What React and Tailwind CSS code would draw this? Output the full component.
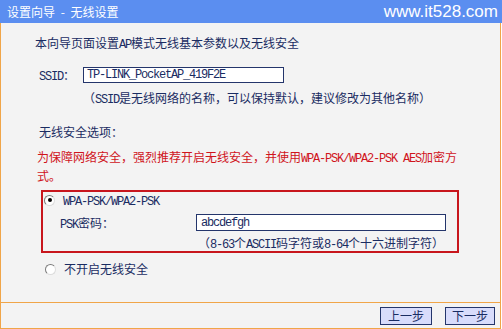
import React from "react";

const A = ({ children }) => (
    <span className="font-['Liberation_Mono'] text-[12px] leading-none tracking-[-1.2px]">{children}</span>
);

const Radio = ({ checked }) => (
    <span className="w-[11px] h-[11px] rounded-full border border-t-[#7a7a7a] border-l-[#7a7a7a] border-r-[#dcdcdc] border-b-[#dcdcdc] bg-white flex items-center justify-center shrink-0">
        {checked && <span className="w-[4px] h-[4px] rounded-full bg-black" />}
    </span>
);

const WizardWireless = () => {
    return (
        <div className="w-[502px] h-[329px] bg-white overflow-hidden font-['Noto_Sans_CJK_SC',sans-serif] text-[12px] text-[#1a2c62]">
            {/* Header */}
            <div className="h-[23px] bg-[#5b8ef0] flex items-center justify-between pl-[7px] pr-[4px] text-white">
                <span className="text-[12px] leading-none">设置向导 <span className="mx-[3px]">-</span> 无线设置</span>
                <span className="font-['Liberation_Sans',sans-serif] text-[17px] leading-none">www.it528.com</span>
            </div>

            <div className="w-[501px] h-[306px] bg-[#f3f3f3] border-l border-r border-b border-[#f0a548] flex flex-col">
                <div className="h-[279px] pl-[34px] pt-[12px] flex flex-col">
                    <p className="leading-[16px]">
                        本向导页面设置<A>AP</A>模式无线基本参数以及无线安全
                    </p>

                    <div className="mt-[16px] h-[16px] flex items-center">
                        <span className="w-[48px] pl-[4px]"><A>SSID</A>：</span>
                        <div className="w-[201px] h-[16px] bg-white border border-[#24356b] flex items-center pl-[3px]">
                            <A>TP-LINK_PocketAP_419F2E</A>
                        </div>
                    </div>

                    <p className="mt-[7px] pl-[48px] leading-[16px]">
                        （<A>SSID</A>是无线网络的名称，可以保持默认，建议修改为其他名称）
                    </p>

                    <p className="mt-[18px] pl-[4px] leading-[16px]">无线安全选项：</p>

                    <div className="mt-[7px] pl-[2px] leading-[19px] text-[#d0141c]">
                        <p>为保障网络安全，强烈推荐开启无线安全，并使用<A>WPA-PSK/WPA2-PSK AES</A>加密方</p>
                        <p>式。</p>
                    </div>

                    <div className="mt-[5px] ml-[6px] w-[418px] h-[63px] border-2 border-[#c8161d] flex flex-col">
                        <div className="mt-[1px] h-[14px] pl-[1px] flex items-center">
                            <Radio checked />
                            <span className="ml-[8px]"><A>WPA-PSK/WPA2-PSK</A></span>
                        </div>
                        <div className="mt-[7px] h-[17px] pl-[17px] flex items-center">
                            <span className="w-[136px]"><A>PSK</A>密码：</span>
                            <div className="w-[250px] h-[17px] bg-white border border-[#24356b] flex items-center pl-[4px]">
                                <A>abcdefgh</A>
                            </div>
                        </div>
                        <p className="mt-[5px] pl-[155px] leading-[14px]">
                            （<A>8-63</A>个<A>ASCII</A>码字符或<A>8-64</A>个十六进制字符）
                        </p>
                    </div>

                    <div className="mt-[8px] h-[16px] pl-[10px] flex items-center">
                        <Radio />
                        <span className="ml-[8px]">不开启无线安全</span>
                    </div>
                </div>

                <div className="h-[26px] border-t border-[#f0a548] flex items-start justify-end pt-[4px] pr-[5px] gap-[13px]">
                    <button className="w-[52px] h-[18px] bg-[#d8dcfb] border border-[#24356b] text-[12px] leading-none text-[#1a2c62]">上一步</button>
                    <button className="w-[50px] h-[18px] bg-[#d8dcfb] border border-[#24356b] text-[12px] leading-none text-[#1a2c62]">下一步</button>
                </div>
            </div>
        </div>
    );
};

export default WizardWireless;
